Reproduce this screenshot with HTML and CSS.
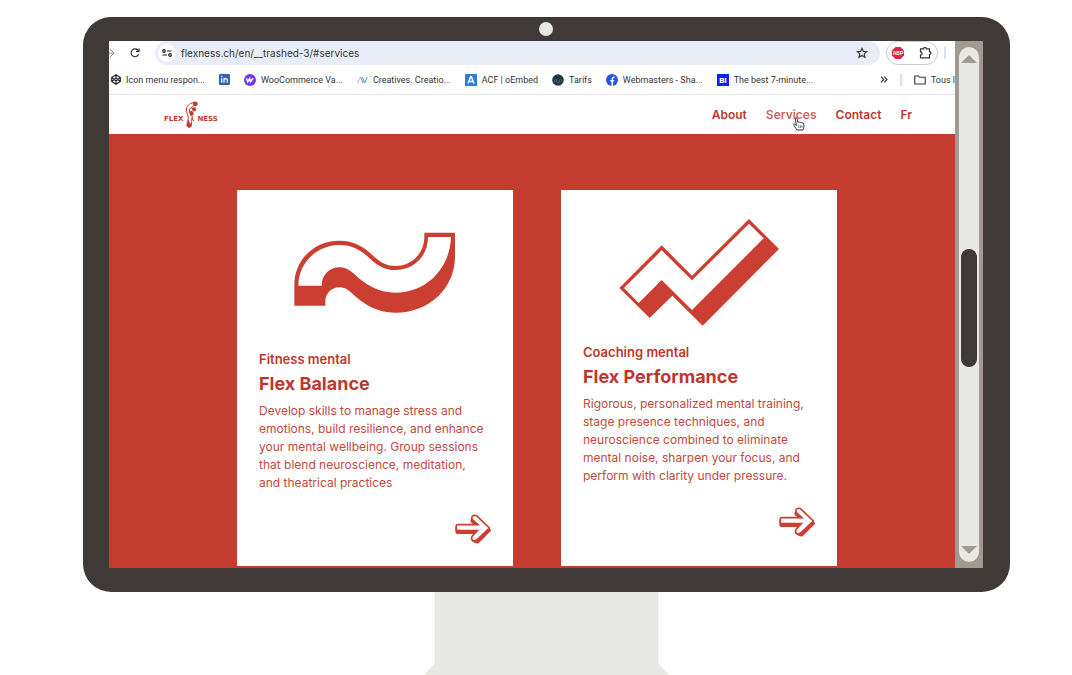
FILE: index.html
```html
<!DOCTYPE html>
<html lang="en">
<head>
  <meta charset="UTF-8">
  <meta name="viewport" content="width=device-width, initial-scale=1.0">
  <title>Flexness - Services</title>
  <link rel="stylesheet" href="styles.css">
</head>
<body>
  <div class="scene">
    <div class="monitor">
      <div class="bezel"><div class="camera"></div></div>
      <div class="screen">
        <div class="browser">

          <div class="toolbar">
            <button class="icon-btn forward" aria-label="Forward">
              <svg width="6" height="10" viewBox="0 0 6 10" fill="none" stroke="#888" stroke-width="1"><path d="M0 5h4M1 1l4 4-4 4"/></svg>
            </button>
            <button class="icon-btn reload" aria-label="Reload">
              <svg width="10" height="10" viewBox="0 0 10 10" fill="none" stroke="#333" stroke-width="1.2"><path d="M8.6 6.3A3.9 3.9 0 1 1 8.2 2.6M9 .5v3H6"/></svg>
            </button>
            <div class="address">
              <button class="icon-btn site-info" aria-label="Site information">
                <svg width="10" height="8" viewBox="0 0 10 8" fill="none" stroke="#222" stroke-width="1.2"><circle cx="2" cy="2" r="1.3"/><path d="M5 2h4.5M.5 6H5"/><circle cx="8" cy="6" r="1.3"/></svg>
              </button>
              <input class="url" type="text" aria-label="Address" value="flexness.ch/en/__trashed-3/#services">
              <button class="icon-btn" aria-label="Bookmark this page">
                <svg width="12" height="12" viewBox="0 0 12 12" fill="none" stroke="#333" stroke-width="1.1"><path d="M6 1.3l1.4 3.1 3.3.3-2.5 2.2.8 3.4L6 8.5l-3 1.8.8-3.4L1.3 4.7l3.3-.3z"/></svg>
              </button>
            </div>
            <div class="extensions">
              <button class="icon-btn" aria-label="Adblock Plus">
                <svg width="12" height="12" viewBox="0 0 12 12"><path d="M3.5 0h5L12 3.5v5L8.500 12h-5L0 8.500v-5z" fill="#d9293b"/><text x="6" y="8" text-anchor="middle" class="abp">ABP</text></svg>
              </button>
              <button class="icon-btn" aria-label="Extensions">
                <svg width="13" height="12" viewBox="0 0 13 12" fill="none" stroke="#333" stroke-width="1.2"><path d="M1.500 1.800h3.200a1.300 1.300 0 0 1 2.600 0h3.200v2.900a1.300 1.300 0 0 1 0 2.800v3.400h-9V8a1.500 1.500 0 0 0 0-3.200z"/></svg>
              </button>
            </div>
            <span class="divider"></span>
          </div>

          <div class="bookmarks">
            <a href="#">
              <svg width="10" height="11" viewBox="0 0 10 11" fill="none" stroke="#222" stroke-width="1.2"><path d="M5 .8l4.300 2.700v4L5 10.200.7 7.500v-4zM5 .8v3.300M5 7v3.200M.7 3.500L5 7l4.300-3.500M.7 7.500L5 4.100l4.300 3.400"/></svg>
              <span>Icon menu respon...</span>
            </a>
            <a href="#" aria-label="LinkedIn">
              <svg width="11" height="11" viewBox="0 0 11 11"><rect width="11" height="11" rx="1" fill="#2a66b5"/><path d="M2.700 4.300v4.500M5 8.800V4.300M5 6.300c0-2 3.300-2.300 3.300 0v2.500" fill="none" stroke="#fff" stroke-width="1.3"/><circle cx="2.700" cy="2.500" r=".8" fill="#fff"/></svg>
            </a>
            <a href="#">
              <svg width="12" height="12" viewBox="0 0 12 12"><circle cx="6" cy="6" r="6" fill="#7038ec"/><path d="M2.500 4.300l1.200 3.500L5.700 4.500l.7 3.300 2.800-3.500" fill="none" stroke="#fff" stroke-width="1.4"/></svg>
              <span>WooCommerce Va...</span>
            </a>
            <a href="#">
              <svg width="11" height="8" viewBox="0 0 11 8" fill="none"><path d="M.5 7L3 1.200" stroke="#d9a0d8"/><path d="M3.500 1l2.800 6" stroke="#a070c8"/><path d="M5.500 1l2.200 6L10.300 1" stroke="#39a5b8"/></svg>
              <span>Creatives. Creatio...</span>
            </a>
            <a href="#">
              <svg width="12" height="12" viewBox="0 0 12 12"><rect width="12" height="12" fill="#2f7bd8"/><path d="M3 9.500L5.600 2.800h.8L9 9.500M4.200 7.400h3.700" fill="none" stroke="#fff" stroke-width="1.5"/></svg>
              <span>ACF | oEmbed</span>
            </a>
            <a href="#">
              <svg width="12" height="12" viewBox="0 0 12 12"><circle cx="6" cy="6" r="5.800" fill="#203840"/><path d="M2.500 8V6l1-1 1 1v2M7.500 8V6l1-1 1 1v2M5 9l1-1.500L7 9" fill="none" stroke="#47727b" stroke-width=".7"/></svg>
              <span>Tarifs</span>
            </a>
            <a href="#">
              <svg width="12" height="12" viewBox="0 0 12 12"><circle cx="6" cy="6" r="6" fill="#2456e8"/><path d="M6.300 12V5.200c0-1.700.8-2.100 2.200-1.900M4.200 6.800h4" fill="none" stroke="#fff" stroke-width="1.5"/></svg>
              <span>Webmasters - Sha...</span>
            </a>
            <a href="#">
              <svg width="12" height="12" viewBox="0 0 12 12"><rect width="12" height="12" fill="#0624ee"/><text x="6" y="9" text-anchor="middle" class="bi">BI</text></svg>
              <span>The best 7-minute...</span>
            </a>
            <div class="more">
              <button class="icon-btn" aria-label="More bookmarks">
                <svg width="8" height="7" viewBox="0 0 8 7" fill="none" stroke="#333" stroke-width="1.1"><path d="M1 .7l2.700 2.800L1 6.300M4.300.7L7 3.500 4.300 6.300"/></svg>
              </button>
              <span class="divider"></span>
              <a href="#">
                <svg width="12" height="10" viewBox="0 0 12 10" fill="none" stroke="#333" stroke-width="1.1"><path d="M.8 1h3.700l1.200 1.300h5.500V9H.8z"/></svg>
                <span>Tous l</span>
              </a>
            </div>
          </div>

          <header class="site-header">
            <a class="logo" href="#" aria-label="Flexness">
              <span>FLEX</span>
              <svg width="16" height="28" viewBox="0 0 16 28">
                <path d="M12 1.500C8 1.500 4 4 3.500 8c-.3 3 1 5 1.700 8 .5 3-1.700 6-1 8.500.7 2 3.300 2 4 0 .7-3 .2-5 .7-8" fill="none" stroke="#c63b30"/>
                <path d="M10 1l3.500-.5 1.500 2.500-2 2.500-3-1zM8.500 7.500l3-1.500 2 2-1 2-2.500.5zM6 11.500l2.500-2 2 2 0 2.500-3 1zM4 22.500l1.500-4 1.500 4h2l-.5 3-2.500 1.500-2.500-2z" fill="#c63b30"/>
                <path d="M10.500 5L6.500 8v3M9 14.500l.5 4 1.500 1.500" fill="none" stroke="#c63b30"/>
              </svg>
              <span>NESS</span>
            </a>
            <nav class="menu">
              <a href="#">About</a>
              <a href="#services" class="active">Services
                <svg class="cursor" width="12" height="14" viewBox="0 0 12 14" fill="#fff" stroke="#333" stroke-width="1" stroke-linejoin="round"><path d="M4 13L1 8.500C.2 7.300 1.500 6.500 2.500 7.500L3.500 8.500 2.200 2C2 .5 3.700.3 4 1.700L5 5.500c.3-1 1.700-1 2 .2.500-.8 1.700-.5 1.900.5.6-.6 1.800-.2 1.900.8.400 2.500 0 3.800-.8 6z"/><path d="M5.500 8.500l.4 2.500M7.200 8.300l.4 2.500M8.900 8.200l.1 2.500" stroke-width=".7"/></svg>
              </a>
              <a href="#">Contact</a>
              <a href="#">Fr</a>
            </nav>
          </header>

          <main class="services" id="services">
            <article class="card">
              <svg class="picture" viewBox="87 117 696 393">
                <path fill="#cb3f32" d="M193 377V315C193 240 252 182 328 182C372 182 403 200 430 228C455 250 472 258 496 258C545 258 583 220 583 170V158H675V230C675 325 596 398 496 398C440 398 398 370 367 341C353 328 343 322 328 322C303 322 286 342 286 365V377Z"/>
                <path fill="#fff" d="M205 317C205 250 260 195 328 195C368 195 396 213 420 236C446 260 468 270 496 270C552 270 594 228 594 171H663C660 265 590 338 496 338C445 338 405 312 375 284C357 268 345 262 328 262C298 262 275 286 275 317Z"/>
              </svg>
              <h3>Fitness mental</h3>
              <h2>Flex Balance</h2>
              <p>Develop skills to manage stress and<br>emotions, build resilience, and enhance<br>your mental wellbeing. Group sessions<br>that blend neuroscience, meditation,<br>and theatrical practices</p>
              <a class="arrow" href="#" aria-label="Flex Balance">
                <svg width="36" height="30" viewBox="675 521 108 90">
                  <path fill="#cb3f32" stroke="#cb3f32" stroke-width="6" d="M679 561q0-3 3-3H744L726 545Q722 539 728 534Q735 529 742 535L780 570L744 606Q738 609 727 600L728 593L742 578H683q-4 0-4-4z"/>
                  <path fill="#fff" stroke="#cb3f32" stroke-width="5" d="M679 556q0-3 3-3H744L727 538Q723 532 728 527Q735 522 742 528L778 563L740 599Q732 604 727 599Q722 592 728 586L742 571H683q-4 0-4-4z"/>
                </svg>
              </a>
            </article>

            <article class="card">
              <svg class="picture" viewBox="99 117 696 372">
                <path fill="#cb3f32" d="M208 324L335 196L426 287L597 117L687 207L458 437L367 347L299 414Z"/>
                <path fill="#fff" d="M222 324L335 211L426 301L597 131L641 175L426 390L335 300L266 369Z"/>
              </svg>
              <h3>Coaching mental</h3>
              <h2>Flex Performance</h2>
              <p>Rigorous, personalized mental training,<br>stage presence techniques, and<br>neuroscience combined to eliminate<br>mental noise, sharpen your focus, and<br>perform with clarity under pressure.</p>
              <a class="arrow" href="#" aria-label="Flex Performance">
                <svg width="36" height="30" viewBox="675 521 108 90">
                  <path fill="#cb3f32" stroke="#cb3f32" stroke-width="6" d="M679 561q0-3 3-3H744L726 545Q722 539 728 534Q735 529 742 535L780 570L744 606Q738 609 727 600L728 593L742 578H683q-4 0-4-4z"/>
                  <path fill="#fff" stroke="#cb3f32" stroke-width="5" d="M679 556q0-3 3-3H744L727 538Q723 532 728 527Q735 522 742 528L778 563L740 599Q732 604 727 599Q722 592 728 586L742 571H683q-4 0-4-4z"/>
                </svg>
              </a>
            </article>
          </main>
        </div>

        <div class="scrollbar">
          <div class="track">
            <button class="icon-btn" aria-label="Scroll up">
              <svg width="16" height="8" viewBox="0 0 16 8"><path d="M8 0l8 8H0z" fill="#a09a92"/></svg>
            </button>
            <div class="thumb"></div>
            <button class="icon-btn" aria-label="Scroll down">
              <svg width="16" height="8" viewBox="0 0 16 8"><path d="M8 8l8-8H0z" fill="#a09a92"/></svg>
            </button>
          </div>
        </div>
      </div>
    </div>
    <div class="stand"></div>
  </div>
</body>
</html>
```
FILE: styles.css
```css
* {
  box-sizing: border-box;
}

body {
  margin: 0;
  height: 100vh;
  overflow: hidden;
  background: #fefefe;
  font-family: Inter, sans-serif;
}

h2, h3, p {
  margin: 0;
}

a {
  text-decoration: none;
}

svg {
  display: block;
  flex: none;
}

.icon-btn {
  display: flex;
  align-items: center;
  justify-content: center;
  flex: none;
  padding: 0;
  border: none;
  background: none;
  cursor: pointer;
}

/* monitor */
.scene {
  padding: 17px 62px 0 83px;
}

.monitor {
  padding: 0 27px 24px 26px;
  border-radius: 28px;
  background: #3f3938;
}

.bezel {
  display: flex;
  align-items: center;
  justify-content: center;
  height: 24px;
}

.camera {
  width: 14px;
  height: 14px;
  border-radius: 50%;
  background: #e8e9e4;
}

.screen {
  display: flex;
}

.browser {
  flex: 1;
  min-width: 0;
  overflow: hidden;
  background: #fff;
}

.stand {
  width: 246px;
  height: 83px;
  margin: 0 auto;
  background: #e8e9e4;
  clip-path: polygon(11px 0, 235px 0, 235px 72px, 246px 83px, 0 83px, 11px 72px);
}

/* browser bars */
.toolbar {
  display: flex;
  align-items: center;
  height: 24px;
  padding-right: 9px;
}

.forward {
  width: 6px;
}

.reload {
  width: 40px;
}

.address {
  display: flex;
  align-items: center;
  flex: 1;
  height: 24px;
  margin-right: 6px;
  padding: 0 12px 0 3px;
  border-radius: 12px;
  background: #e9edf7;
}

.site-info {
  width: 18px;
  height: 18px;
  border-radius: 50%;
  background: #fff;
}

.url {
  flex: 1;
  min-width: 0;
  padding: 0 0 0 5px;
  border: none;
  outline: none;
  background: none;
  color: #333;
  font: 10px Inter, sans-serif;
}

.extensions {
  display: flex;
  align-items: center;
  justify-content: space-between;
  width: 52px;
  height: 24px;
  margin-right: 6px;
  padding: 0 5px;
  border: 1px solid #ccc;
  border-radius: 12px;
}

.abp, .bi {
  fill: #fff;
  font-weight: 800;
}

.abp {
  font-size: 5px;
}

.bi {
  font-size: 8px;
}

.divider {
  width: 2px;
  height: 12px;
  background: #d5e2f5;
}

.bookmarks {
  display: flex;
  align-items: center;
  gap: 14px;
  height: 30px;
  padding-left: 2px;
  border-bottom: 1px solid #e6e6e8;
  white-space: nowrap;
}

.bookmarks a {
  display: flex;
  align-items: center;
  gap: 5px;
  flex: none;
  color: #333;
  font-family: Roboto, sans-serif;
  font-size: 9px;
}

.more {
  display: flex;
  align-items: center;
  gap: 12px;
  margin-left: auto;
}

/* website */
.site-header {
  display: flex;
  align-items: center;
  justify-content: space-between;
  height: 39px;
  padding: 0 43px 0 55px;
}

.logo {
  display: flex;
  align-items: center;
  color: #c63b30;
  font: bold 7px "DejaVu Sans", sans-serif;
}

.logo span {
  padding-top: 8px;
}

.logo svg {
  margin-right: -2px;
}

.menu {
  display: flex;
  gap: 19px;
}

.menu a {
  position: relative;
  color: #bd372e;
  font-size: 12px;
  font-weight: 600;
}

.menu .active {
  color: #d4645d;
}

.cursor {
  position: absolute;
  left: 27px;
  top: 10px;
}

.services {
  display: grid;
  grid-template-columns: 1fr 1fr;
  gap: 48px;
  padding: 56px 118px 2px 128px;
  background: #c43b30;
}

.card {
  padding: 29px 22px 22px;
  background: #fff;
  color: #bd372e;
}

.picture {
  width: 100%;
}

.card h3 {
  font-size: 13px;
  font-weight: 600;
  line-height: 18px;
}

.card h2 {
  margin: 4px 0 6px;
  font-size: 18px;
  font-weight: 700;
  line-height: 24px;
}

.card p {
  color: #c14940;
  font-size: 12px;
  line-height: 18px;
  white-space: nowrap;
}

.arrow {
  display: flex;
  justify-content: flex-end;
  margin-top: 22px;
}

/* scrollbar */
.scrollbar {
  display: flex;
  width: 28px;
  padding: 6px 4px;
  background: #a09a92;
}

.track {
  display: flex;
  flex-direction: column;
  align-items: center;
  justify-content: space-between;
  flex: 1;
  padding: 8px 0;
  border-radius: 10px;
  background: #e8e9e4;
}

.thumb {
  width: 16px;
  height: 118px;
  margin-top: 6px;
  border-radius: 8px;
  background: #3f3938;
}
```
